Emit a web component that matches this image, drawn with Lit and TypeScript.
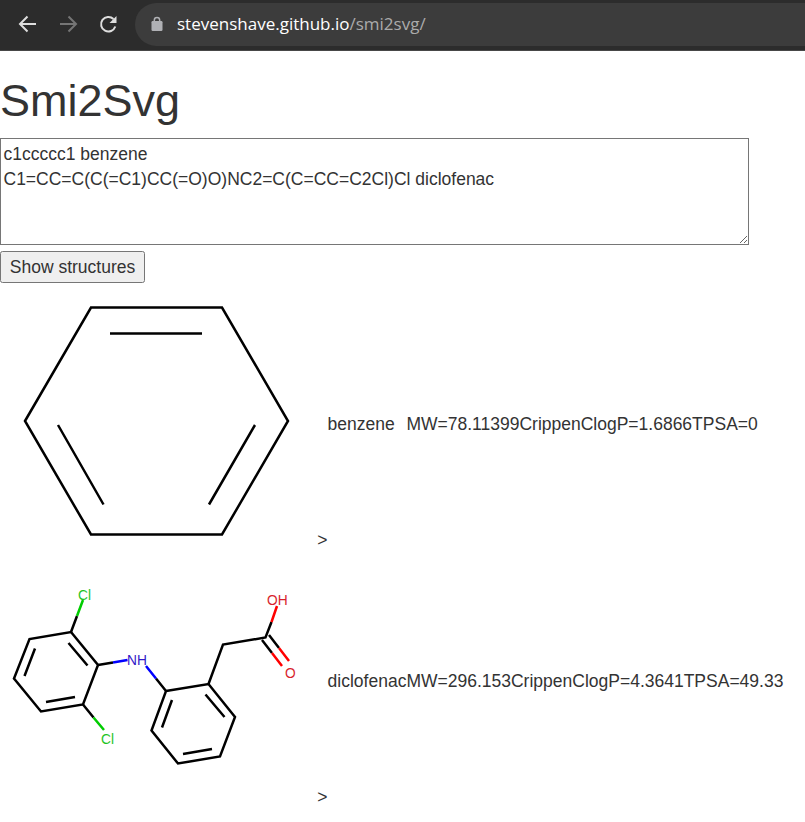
import { LitElement, html, svg, css } from "lit";
import { customElement, property, state } from "lit/decorators.js";

type Bond = [kind: "c" | "cl" | "n" | "o", path: string];
type AtomLabel = [kind: "cl" | "n" | "o", x: number, y: number, text: string];

interface Molecule {
  name: string;
  props: string[];
  bonds: Bond[];
  labels: AtomLabel[];
}

const MOLECULES: Molecule[] = [
  {
    name: "benzene",
    props: ["MW=78.11399", "CrippenClogP=1.6866", "TPSA=0"],
    bonds: [
      ["c", "M25 125L91 11.5H222L288 125L222 238.5H91Z"],
      ["c", "M110 37.5H202M58 129L103.5 208.5M255 129L209 208.5"],
    ],
    labels: [],
  },
  {
    name: "diclofenac",
    props: ["MW=296.153", "CrippenClogP=4.3641", "TPSA=49.33"],
    bonds: [
      ["c", "M71 79L98 112L83 151.5L41 158.5L14 125.5L29.5 86Z"],
      ["c", "M68.5 90L87.5 112.5M35 95.5L24.5 123M46 149L75 144"],
      ["c", "M166 138L208.5 131L235 164L220 203.5L178 210.5L151.5 177.5Z"],
      ["c", "M205.5 141.5L224.5 164M172 147L162 174.5M183 201L212 196"],
      ["c", "M71 79L77 63M83 151.5L93.5 164.5M98 112L113 109.5M156 125.5L166 138"],
      ["c", "M208.5 131L223 91.5L265.5 84.5L271.5 69M262 87L272 100M269 82L279 95"],
      ["cl", "M77 63L83 47M93.5 164.5L104 177"],
      ["n", "M113 109.5L127.5 107M146 113L156 125.5"],
      ["o", "M271.5 69L277 53M272 100L282 113M279 95L289 108"],
    ],
    labels: [
      ["cl", 78, 47, "Cl"],
      ["cl", 101, 191, "Cl"],
      ["n", 127, 112, "NH"],
      ["o", 267, 52, "OH"],
      ["o", 285, 125, "O"],
    ],
  },
];

@customElement("browser-bar")
export class BrowserBar extends LitElement {
  static styles = css`
    :host {
      display: flex;
      align-items: center;
      box-sizing: border-box;
      height: 51px;
      padding: 3px 0 5px 16px;
      background: #2c2c2c;
      border-bottom: 1px solid #484848;
      font-family: "Open Sans", "Noto Sans", sans-serif;
    }
    .nav {
      display: flex;
      gap: 16px;
    }
    .tool {
      display: flex;
      padding: 0;
      border: 0;
      background: none;
      color: #dedede;
    }
    .tool:disabled {
      color: #757575;
    }
    .icon {
      width: 24px;
      height: 24px;
      fill: none;
      stroke: currentColor;
      stroke-width: 2;
    }
    .address {
      flex: 1;
      display: flex;
      align-items: center;
      gap: 14px;
      height: 43px;
      margin-left: 15px;
      padding-left: 16px;
      background: #3c3c3c;
      border-radius: 22px 0 0 22px;
    }
    .lock {
      width: 12px;
      height: 16px;
      flex: none;
    }
    .url {
      font-size: 17px;
      line-height: 24px;
      color: #ababab;
      text-decoration: none;
      white-space: nowrap;
    }
    .host {
      color: #ffffff;
    }
  `;

  render() {
    return html`
      <nav class="nav" aria-label="History">
        <button class="tool" aria-label="Back">
          <svg class="icon" viewBox="0 0 24 24"><path d="M20 12H4.500M11.500 4.500L4 12L11.500 19.500" /></svg>
        </button>
        <button class="tool" aria-label="Forward" disabled>
          <svg class="icon" viewBox="0 0 24 24"><path d="M4 12H19.500M12.500 4.500L20 12L12.500 19.500" /></svg>
        </button>
        <button class="tool" aria-label="Reload">
          <svg class="icon" viewBox="0 0 24 24">
            <path d="M19.300 14.500A7.300 7.300 0 1 1 17.500 7" />
            <path d="M20.500 4V11H13.500Z" fill="currentColor" stroke="none" />
          </svg>
        </button>
      </nav>
      <div class="address">
        <svg class="lock" viewBox="0 0 12 16" aria-hidden="true">
          <rect x="0.500" y="5" width="11" height="10" rx="1.200" fill="#b0b1b5" />
          <path d="M3.300 6V4.200A2.700 2.700 0 0 1 8.700 4.200V6" fill="none" stroke="#b0b1b5" stroke-width="1.500" />
        </svg>
        <a class="url" href="#"><span class="host">stevenshave.github.io</span>/smi2svg/</a>
      </div>
    `;
  }
}

@customElement("molecule-drawing")
export class MoleculeDrawing extends LitElement {
  @property({ attribute: false }) molecule!: Molecule;

  static styles = css`
    :host {
      display: inline;
    }
    .drawing {
      width: 250px;
      height: 200px;
      vertical-align: baseline;
    }
    .bond.c { stroke: #000000; }
    .bond.cl { stroke: #00cc00; }
    .bond.n { stroke: #0000ff; }
    .bond.o { stroke: #ff0000; }
    .atom {
      font-family: "Liberation Sans", Arial, sans-serif;
      font-size: 11px;
    }
    .atom.cl { fill: #1fc41f; }
    .atom.n { fill: #3219c8; }
    .atom.o { fill: #d81f2c; }
  `;

  render() {
    const { name, bonds, labels } = this.molecule;
    return html`<svg class="drawing" viewBox="0 0 250 200" role="img" aria-label=${name}>
      <g transform="scale(0.8)" fill="none" stroke-width="2.5">
        ${bonds.map(([kind, d]) => svg`<path class="bond ${kind}" d=${d} />`)}
      </g>
      ${labels.map(
        ([kind, x, y, text]) => svg`<text class="atom ${kind}" x=${x * 0.8} y=${y * 0.8}>${text}</text>`
      )}
    </svg>`;
  }
}

@customElement("app-root")
export class AppRoot extends LitElement {
  @state() private smiles =
    "c1ccccc1 benzene\nC1=CC=C(C(=C1)CC(=O)O)NC2=C(C=CC=C2Cl)Cl diclofenac";

  static styles = css`
    :host {
      display: block;
      min-height: 100vh;
      background: #ffffff;
    }
    /* Page content is shown at the browser's 125% zoom level. */
    .page {
      zoom: 1.25;
      font: 14px/20px "Liberation Sans", Arial, sans-serif;
      color: #333333;
    }
    .title {
      margin: 0;
      padding: 20px 0 10px;
      font-size: 36px;
      font-weight: 400;
      line-height: 1.1;
    }
    .form {
      display: flex;
      flex-direction: column;
      align-items: flex-start;
      gap: 5px;
      margin-bottom: 10px;
    }
    .input {
      box-sizing: border-box;
      width: 93%;
      margin: 0;
      padding: 2px;
      border: 1px solid #767676;
      border-radius: 0;
      background: #ffffff;
      color: inherit;
      font: inherit;
      outline: 0;
    }
    .submit {
      margin: 0;
      padding: 2px 7px;
      border: 1px solid #767676;
      border-radius: 2px;
      background: #efefef;
      color: inherit;
      font: inherit;
    }
    .results {
      border-collapse: collapse;
    }
    .cell {
      padding: 0;
      text-align: left;
      font-weight: 400;
      vertical-align: middle;
      white-space: nowrap;
    }
  `;

  private onInput(e: Event) {
    this.smiles = (e.target as HTMLTextAreaElement).value;
  }

  render() {
    return html`
      <browser-bar></browser-bar>
      <main class="page">
        <h1 class="title">Smi2Svg</h1>
        <div class="form">
          <textarea
            class="input"
            rows="4"
            spellcheck="false"
            aria-label="SMILES"
            .value=${this.smiles}
            @input=${this.onInput}
          ></textarea>
          <button class="submit">Show structures</button>
        </div>
        <table class="results">
          <tbody>
            ${MOLECULES.map(
              (m) => html`<tr>
                <td class="cell"><molecule-drawing .molecule=${m}></molecule-drawing> &gt;</td>
                <th class="cell" scope="row">${m.name}</th>
                <td class="cell">${m.props.join("")}</td>
              </tr>`
            )}
          </tbody>
        </table>
      </main>
    `;
  }
}
